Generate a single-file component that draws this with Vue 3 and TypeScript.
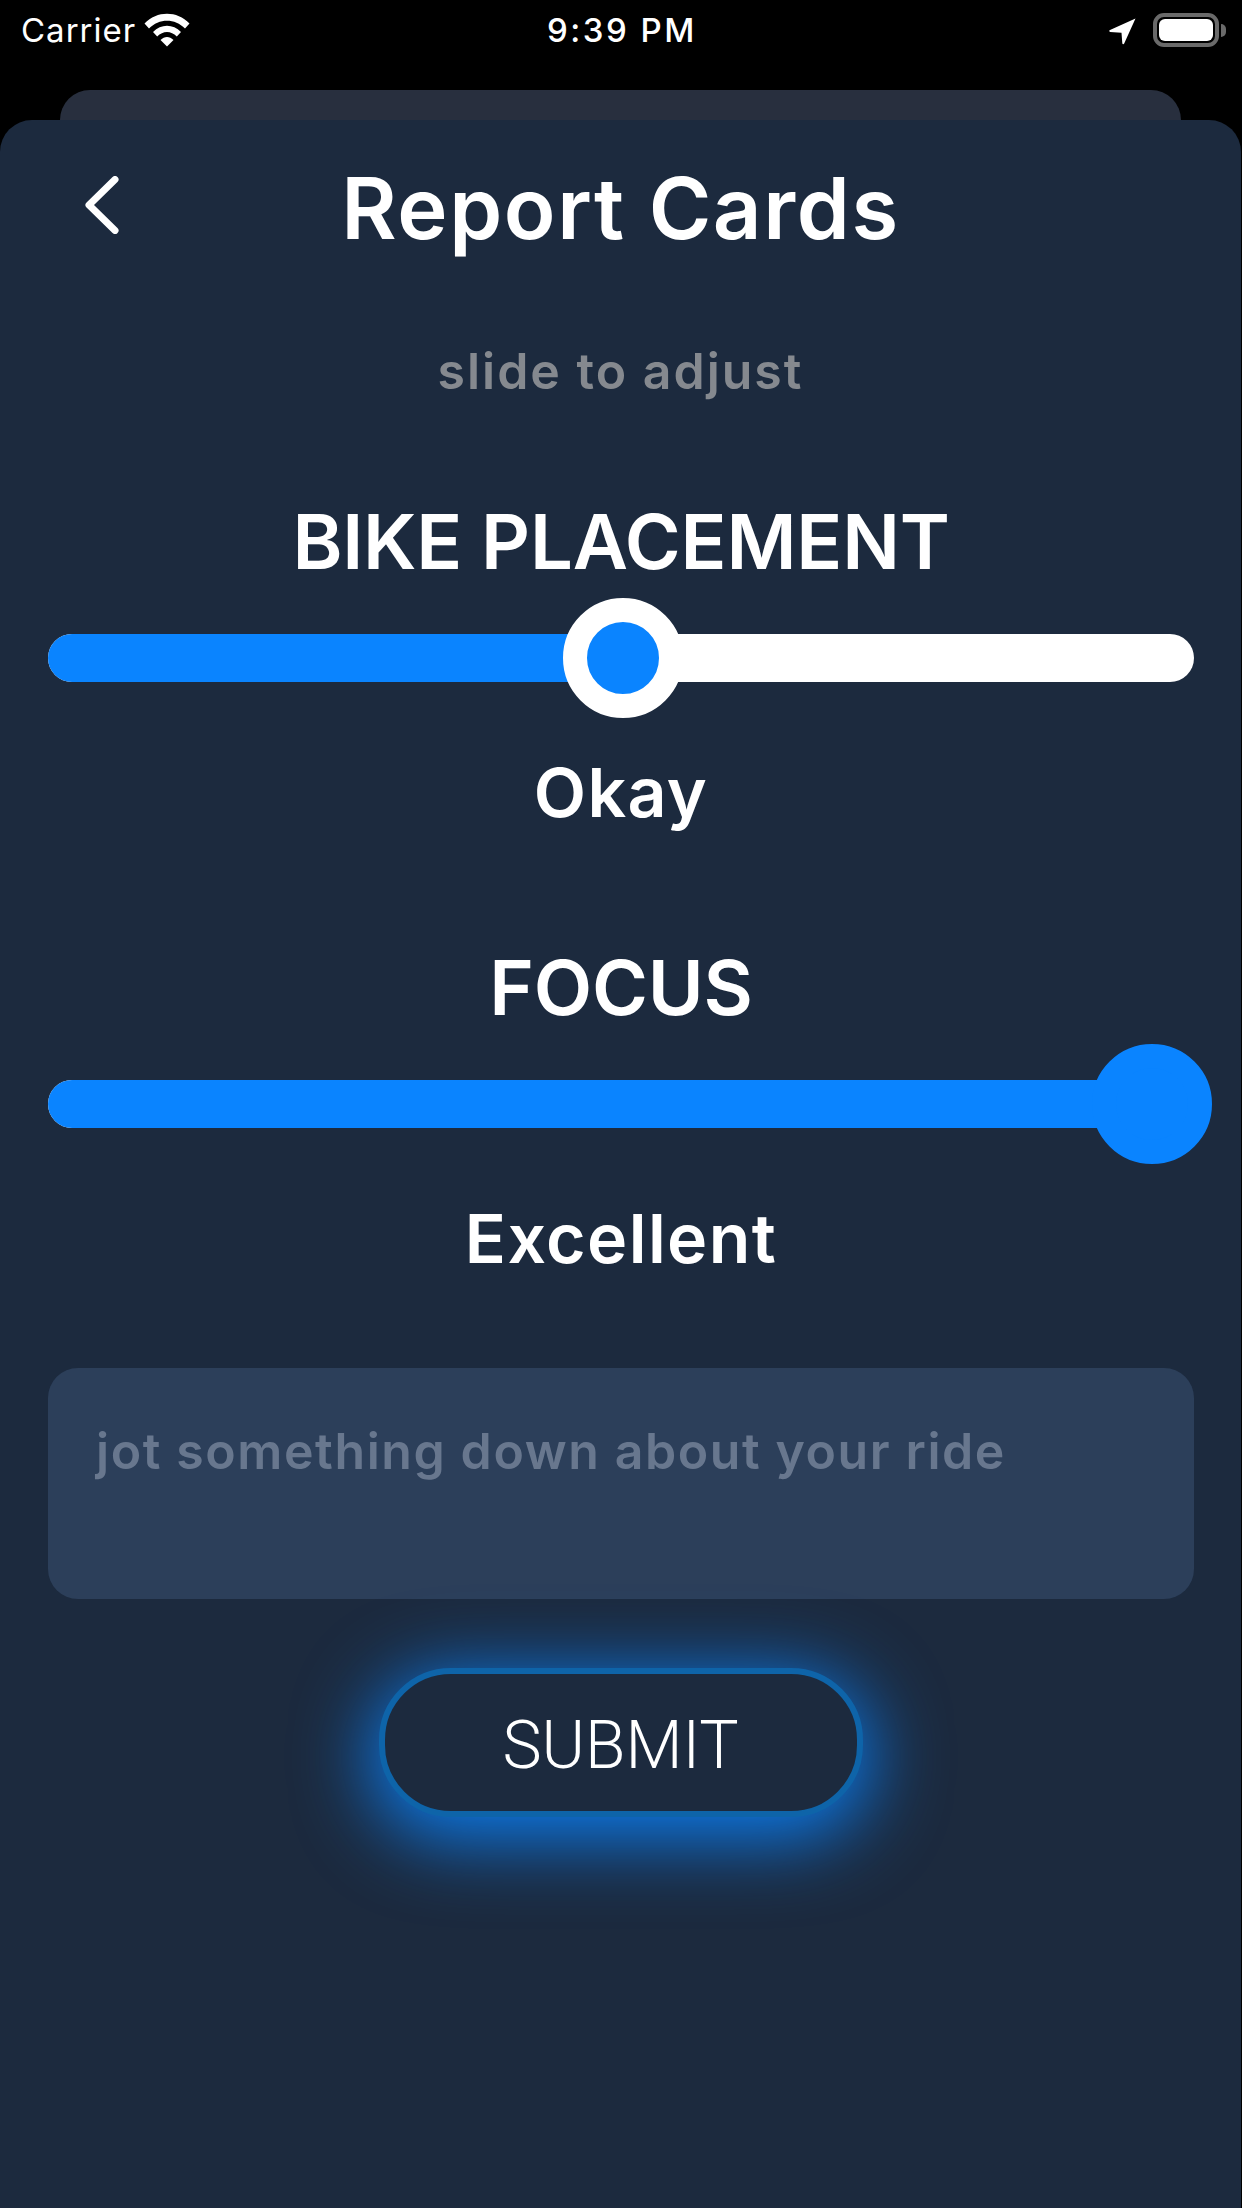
<script setup lang="ts">
interface Rating {
  title: string;
  label: string;
  value: number;
}

const ratings: Rating[] = [
  { title: "BIKE PLACEMENT", label: "Okay", value: 0.5 },
  { title: "FOCUS", label: "Excellent", value: 1 },
];

const thumbMin = -14;
const thumbTravel = 1058;

function thumbLeft(value: number): string {
  return `${thumbMin + value * thumbTravel}px`;
}

function fillWidth(value: number): string {
  return `${thumbMin + 60 + value * thumbTravel}px`;
}
</script>

<template>
  <div class="screen">
    <div class="status">
      <div class="status-left">
        <span class="carrier">Carrier</span>
        <svg class="wifi" width="46" height="34" viewBox="0 0 46 34">
          <path d="M0.5 10.5C13 -2.5 33 -2.5 45.5 10.5L41 15.5C31 5 15 5 5 15.5Z" fill="#fff" />
          <path d="M9 19C17 10.5 29 10.5 37 19L32.8 23.5C27 17.5 19 17.5 13.2 23.5Z" fill="#fff" />
          <path d="M16.5 27C20.5 23 25.5 23 29.5 27L23 33.5Z" fill="#fff" />
        </svg>
      </div>
      <span class="time">9:39 PM</span>
      <div class="status-right">
        <svg class="arrow" width="27" height="27" viewBox="0 0 27 27">
          <path d="M26.5 0.5L15.2 25.4C14.7 26.5 13.4 26.3 13.3 25.2L12.5 14.7L1.2 14C0 13.9 -0.2 12.6 1 12Z" fill="#fff" />
        </svg>
        <div class="battery">
          <div class="battery-level"></div>
        </div>
        <div class="battery-cap"></div>
      </div>
    </div>

    <div class="back-card"></div>

    <main class="card">
      <header class="header">
        <svg class="chevron" width="34" height="58" viewBox="0 0 34 58">
          <path d="M30 3.5L4 29L30 54.5" fill="none" stroke="#fff" stroke-width="7" stroke-linecap="round" stroke-linejoin="round" />
        </svg>
        <h1 class="title">Report Cards</h1>
      </header>

      <p class="hint">slide to adjust</p>

      <section v-for="rating in ratings" :key="rating.title" class="rating">
        <h2 class="rating-title">{{ rating.title }}</h2>
        <div class="track">
          <div class="fill" :style="{ width: fillWidth(rating.value) }"></div>
          <div
            class="thumb"
            :class="{ 'thumb-max': rating.value === 1 }"
            :style="{ left: thumbLeft(rating.value) }"
          ></div>
        </div>
        <p class="rating-label">{{ rating.label }}</p>
      </section>

      <div class="notes">jot something down about your ride</div>

      <button class="submit" type="button"><span class="submit-text">SUBMIT</span></button>
    </main>
  </div>
</template>

<style scoped>
.screen {
  width: 1242px;
  height: 2208px;
  background: #000;
  overflow: hidden;
  font-family: Inter, Roboto, "Noto Sans", sans-serif;
  color: #fff;
  display: flex;
  flex-direction: column;
}

.status {
  height: 90px;
  flex: none;
  position: relative;
  display: flex;
  align-items: flex-start;
  justify-content: space-between;
  font-size: 33px;
  line-height: 61px;
}

.status-left {
  display: flex;
  align-items: flex-start;
  padding-left: 21px;
  gap: 8px;
}

.carrier {
  letter-spacing: 1px;
}

.wifi {
  margin-top: 13px;
}

.time {
  position: absolute;
  left: 547px;
  letter-spacing: 2.5px;
  font-weight: 500;
}

.status-right {
  display: flex;
  align-items: flex-start;
  padding-right: 16px;
}

.arrow {
  margin-top: 18px;
  margin-right: 17px;
}

.battery {
  margin-top: 13px;
  width: 66px;
  height: 34px;
  box-sizing: border-box;
  border: 4px solid #6a6a6a;
  border-radius: 11px;
  padding: 2px;
}

.battery-level {
  height: 100%;
  background: #fff;
  border-radius: 6px;
}

.battery-cap {
  margin-top: 24px;
  margin-left: 2px;
  width: 5px;
  height: 13px;
  background: #6a6a6a;
  border-radius: 0 5px 5px 0;
}

.back-card {
  flex: none;
  height: 60px;
  margin: 0 61px -30px 60px;
  background: #282f3e;
  border-radius: 30px 30px 0 0;
}

.card {
  position: relative;
  flex: 1;
  margin-right: 1px;
  background: #1c2a3e;
  border-radius: 32px 32px 0 0;
  display: flex;
  flex-direction: column;
  align-items: center;
}

.header {
  position: relative;
  align-self: stretch;
  height: 100px;
  margin-top: 36px;
  display: flex;
  align-items: center;
  justify-content: center;
}

.chevron {
  position: absolute;
  left: 85px;
  top: 20px;
}

.title {
  margin: 5px 0 0;
  font-size: 85px;
  font-weight: 600;
  line-height: 100px;
  letter-spacing: 1.6px;
}

.hint {
  margin: 85px 0 0;
  height: 60px;
  font-size: 50px;
  font-weight: 600;
  line-height: 60px;
  color: #85898f;
  letter-spacing: 2px;
}

.rating {
  align-self: stretch;
  display: flex;
  flex-direction: column;
  align-items: center;
  margin-top: 105px;
  padding: 0 47px 0 48px;
}

.hint + .rating {
  margin-top: 95px;
}

.rating-title {
  margin: 0 0 48px;
  font-size: 76px;
  font-weight: 600;
  line-height: 90px;
  letter-spacing: -0.2px;
}

.track {
  position: relative;
  align-self: stretch;
  height: 48px;
  border-radius: 24px;
  background: #fff;
}

.fill {
  height: 100%;
  border-radius: 24px 0 0 24px;
  background: #0a84ff;
}

.thumb {
  position: absolute;
  top: -36px;
  width: 120px;
  height: 120px;
  box-sizing: border-box;
  border: 24px solid #fff;
  border-radius: 50%;
  background: #0a84ff;
}

.thumb-max {
  border-color: #0a84ff;
}

.rating-label {
  margin: 65px 0 0;
  font-size: 68px;
  font-weight: 600;
  line-height: 90px;
  letter-spacing: 1.4px;
}

.notes {
  align-self: stretch;
  box-sizing: border-box;
  height: 231px;
  margin: 85px 47px 0 48px;
  padding: 53px 48px 0;
  background: #2c3f5a;
  border-radius: 30px;
  color: #68778e;
  font-size: 50px;
  font-weight: 600;
  line-height: 60px;
  letter-spacing: 1.6px;
}

.submit {
  box-sizing: border-box;
  width: 484px;
  height: 149px;
  margin-top: 69px;
  padding: 5px 0 0;
  border: 6px solid #0e64a9;
  border-radius: 72px;
  background: #1c2a3e;
  color: #fff;
  font-family: Roboto, sans-serif;
  font-size: 66px;
  font-weight: 300;
  box-shadow: 0 14px 76px 8px rgba(10, 132, 255, 0.9);
}
</style>

<style>
html,
body {
  margin: 0;
  background: #000;
}
</style>
